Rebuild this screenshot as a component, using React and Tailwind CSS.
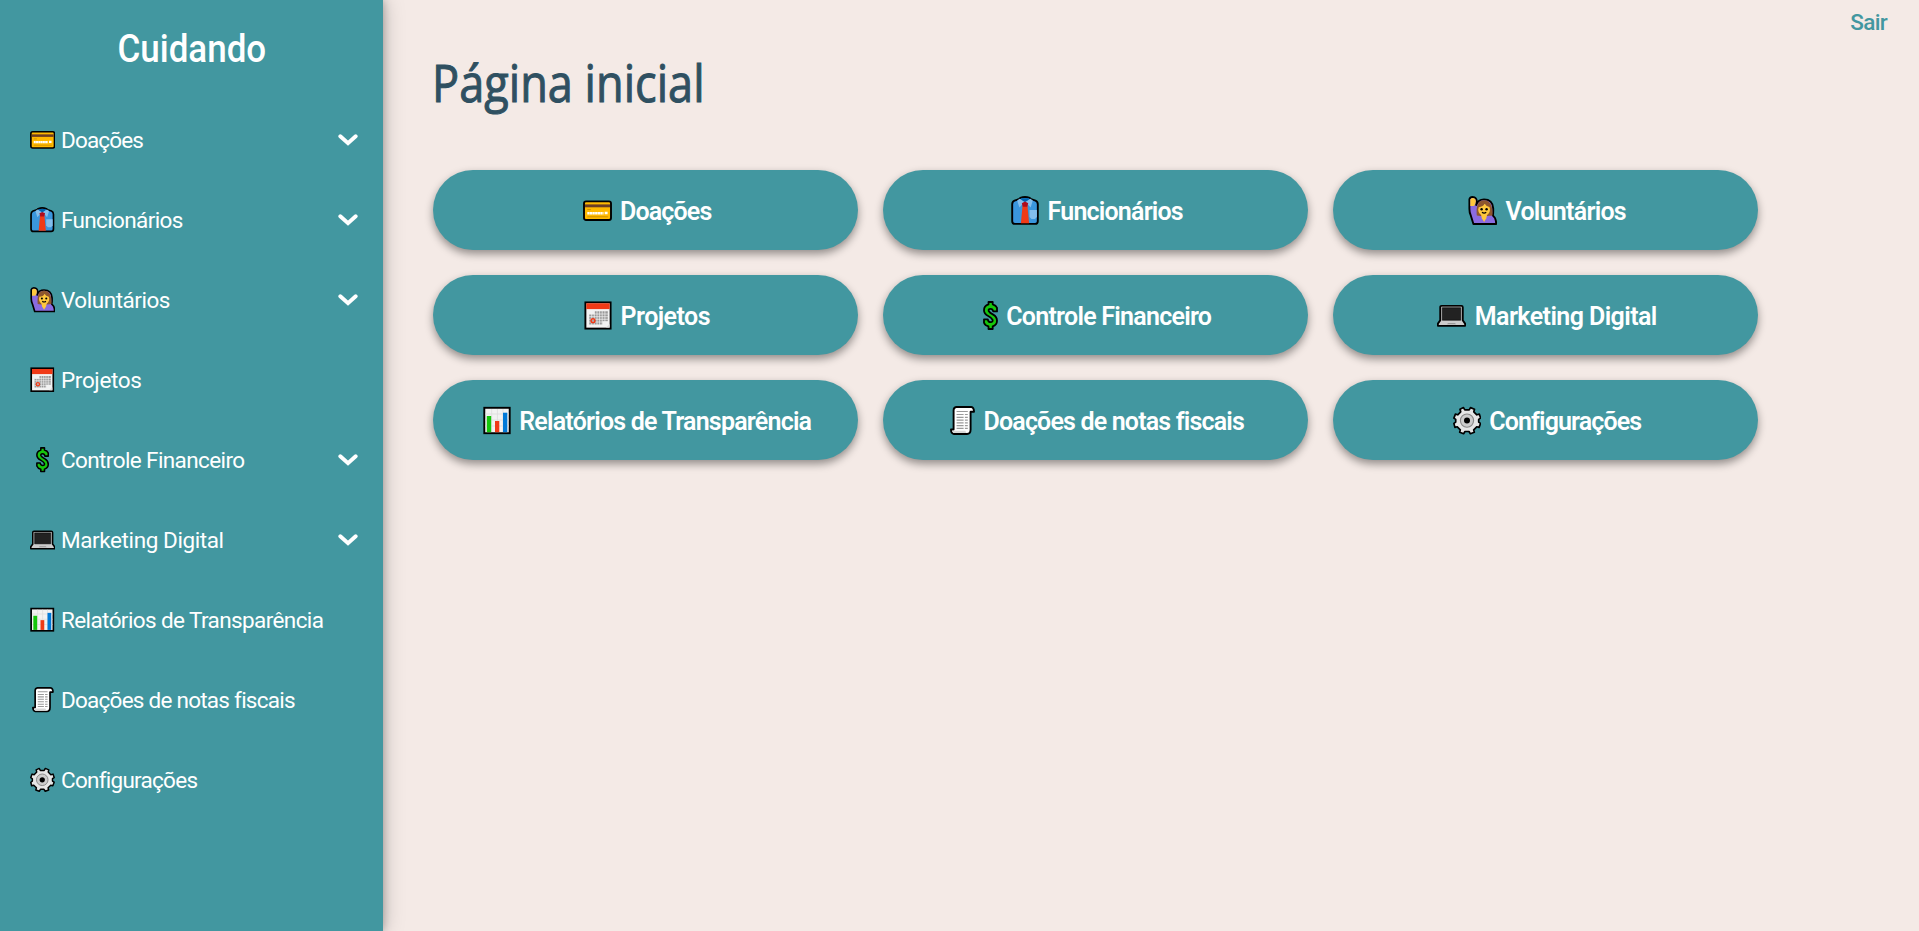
const CardIcon = ({ className }) => (
  <svg className={className} viewBox="0 0 29 29">
    <rect x="1" y="5.4" width="27" height="18.6" rx="2" fill="#ffb900" stroke="#000" strokeWidth="1.9" />
    <path d="M2 8.4h25v2.9H2z" fill="#6b3d26" />
    <path d="M4.3 13.6h3.6M4.3 20.8h20.6" stroke="#d19200" strokeWidth="1" fill="none" />
    <path d="M4.3 17.3h16.2M21.7 17h3.2" stroke="#fff" strokeWidth="2.5" strokeDasharray="2.3 .3" />
  </svg>
);

const ShirtIcon = ({ className }) => (
  <svg className={className} viewBox="0 0 28 29">
    <path d="M9.3 1.9Q14 .2 18.7 1.9L20.2 3.2l4.3 1.4q2.3 1 2.3 3.6v17q0 2.7-2.7 2.7H3.9q-2.7 0-2.7-2.7v-17q0-2.6 2.3-3.6l4.3-1.4z" fill="#3a96dd" stroke="#000" strokeWidth="1.9" strokeLinejoin="round" />
    <path d="M9.8 2.2h8.4l-1.2 3.6h-6z" fill="#0063b1" />
    <path d="M8.600 2.800L13.600 6l-5.200 5.600L6.200 4.600zM19.400 2.800L14.400 6l5.200 5.600 2.200-7z" fill="#83beec" />
    <path d="M11.600 9.200h4.800l1.700 18h-8.200z" fill="#f03a17" />
    <path d="M10.800 7.200L14 5.600l3.200 1.600-1 3.600h-4.400z" fill="#b00b1c" />
    <path d="M18.500 14h7.400v7l-2 2h-3.400l-2-2z" fill="#83beec" />
  </svg>
);

const WomanIcon = ({ className }) => (
  <svg className={className} viewBox="0 0 29 29">
    <path d="M1.400 3.200Q2 1 4.400 1t3.400 1.400q1.200 1.200.8 4L8.200 9q2-5.600 7.800-5.600 8.600 0 9.200 9 .2 5-.4 7l2.200 2.600q1.200 3 1.200 6H5.400L2.800 19.500Q1.400 17 1.400 13z" fill="#8b6be0" stroke="#000" strokeWidth="1.900" strokeLinejoin="round" />
    <path d="M2.300 10V3.600Q2.800 2 4.600 2q3.200 0 3.200 3.600Q7.600 8.500 6 10z" fill="#ffc83d" />
    <path d="M8.800 19.500Q7.400 4.300 16 4.300q9 0 8.500 15.200L19.500 20h-7.200z" fill="#8e562e" />
    <path d="M12.900 18h6.400l-1 4.200-2.200 3.800-2.300-3.800z" fill="#ffc83d" />
    <ellipse cx="16.100" cy="13.800" rx="5.900" ry="6.100" fill="#ffc83d" />
    <path d="M10.600 11.200q5-.4 6-3.600 1.200 2.800 5 3.400-1-5.200-5.400-5.200-4.800 0-5.600 5.400z" fill="#8e562e" />
    <circle cx="13.600" cy="13.200" r="1.200" fill="#000" />
    <circle cx="18.600" cy="13.200" r="1.200" fill="#000" />
    <path d="M14 16.300q2.100 1.700 4.200 0" stroke="#000" strokeWidth="1.300" fill="none" />
  </svg>
);

const CalendarIcon = ({ className }) => (
  <svg className={className} viewBox="0 0 28 29">
    <rect x="1.400" y="1.400" width="25.200" height="26.200" fill="#f2f2f2" stroke="#000" strokeWidth="1.900" />
    <path d="M2.300 2.300h23.400v5.800H2.300z" fill="#f03a17" />
    <path d="M10.600 10.300h13.200v3H10.600zM5.200 13.300h18.600v7H5.200zM5.200 20.300h13.200v3.200H5.200z" fill="#999" />
    <path d="M5 13h19M5 15.700h19M5 18.300h19M5 21h19M7.700 10v14M10.300 10v14M13 10v14M15.600 10v14M18.200 10v14M20.900 10v14" stroke="#f2f2f2" strokeWidth=".7" />
    <circle cx="9" cy="19.700" r="1.900" fill="none" stroke="#f03a17" strokeWidth="1.500" />
    <path d="M22 26.600l3.600-3.600v3.600z" fill="#ddd" />
  </svg>
);

const DollarIcon = ({ className }) => (
  <svg className={className} viewBox="0 0 15 29">
    <path d="M5.500 1h4.200v2.300Q13 4.200 14 6.800v3.600h-3.800q-.4-2.600-2.700-2.600-2.400 0-1.800 2.200.8 1.600 4.500 3.600Q14 15.700 14 19.800q0 4.300-4.300 5.500V28H5.500v-2.600Q2 24.600 1 21.800v-3.500h3.800q.3 2.800 2.800 2.800 2.500-.1 2-2.300-.7-1.800-4.400-3.800Q1 13 1 9.200q0-4.400 4.500-5.800z" fill="#16c60c" stroke="#000" strokeWidth="1.800" strokeLinejoin="round" />
  </svg>
);

const LaptopIcon = ({ className }) => (
  <svg className={className} viewBox="0 0 29 29">
    <path d="M4.600 4.800h19.800q1.400 0 1.400 1.400v13.200l2.300 3.200v2.200H.9v-2.200l2.300-3.200V6.200q0-1.400 1.400-1.400z" fill="#ccc" stroke="#000" strokeWidth="1.800" strokeLinejoin="round" />
    <path d="M4.300 5.800h20.400v13.800H4.300z" fill="#999" />
    <path d="M5.400 6.800h18.200v12.400H5.400z" fill="#222" stroke="#000" strokeWidth=".5" />
    <path d="M11 22h7l1 1.200h-9z" fill="#999" />
  </svg>
);

const ChartIcon = ({ className }) => (
  <svg className={className} viewBox="0 0 28 29">
    <rect x="1.300" y="1.800" width="25.400" height="25.400" fill="#f2f2f2" stroke="#000" strokeWidth="1.900" />
    <path d="M8.700 3v23M14.400 3v23M20 3v23M2.300 8h23.400M2.300 14h23.400M2.300 20h23.400" stroke="#dcdcdc" strokeWidth=".8" />
    <path d="M3.800 10h4.400v16.200H3.800z" fill="#16c60c" />
    <path d="M12 15h4.300v11.200H12z" fill="#f03a17" />
    <path d="M20 6.700h4.300v19.500H20z" fill="#0078d7" />
  </svg>
);

const ScrollIcon = ({ className }) => (
  <svg className={className} viewBox="0 0 25 29">
    <path d="M6.200 1h15q2.800.4 2.800 4.800h-3.400v17.700q0 4.500-3.600 4.500H4Q1 27.400 1 23.500h2.600V4Q3.800 1.400 6.200 1z" fill="#fff" stroke="#000" strokeWidth="1.900" strokeLinejoin="round" />
    <path d="M2.200 24.700h13.200q.2 1.600 1.400 2.300H4.400Q2.600 26.700 2.200 24.700z" fill="#d8d8d8" />
    <path d="M6.600 5.500h11.200M6.600 8.500h7M14.900 8.500h2.900M6.600 11.300h7M14.900 11.300h2.900M6.600 14.100h7M14.900 14.100h2.900M6.600 16.900h7M14.900 16.900h2.900M6.600 19.700h7M14.900 19.700h2.900M6.600 22.300h7M14.900 22.300h2.900" stroke="#9a9a9a" strokeWidth="1.200" />
  </svg>
);

const GearIcon = ({ className }) => (
  <svg className={className} viewBox="0 0 28 29">
    <path d="M10.500 1.600l1.300 2.300h4.400l1.300-2.300 4 1.700-.7 2.500 3 3 2.500-.7 1.300 4-1.900 1.300v2.700l1.900 1.300-1.500 4-2.400-.6-3 3 .6 2.500-3.900 1.400-1.400-2.200h-4l-1.400 2.200-3.900-1.500.6-2.400-3-3-2.400.6L.9 17.400l1.800-1.300v-2.700L.9 12.100l1.500-4 2.300.7 3-3L7 3.200z" fill="#e6e6e6" stroke="#000" strokeWidth="1.700" strokeLinejoin="round" />
    <circle cx="14" cy="14.600" r="6.600" fill="#ccc" stroke="#888" strokeWidth="1.100" />
    <circle cx="14" cy="14.600" r="3" fill="#000" />
  </svg>
);

const Chevron = () => (
  <svg className="h-[14px] w-[20px]" viewBox="0 0 20 14" fill="none" stroke="#fff" strokeWidth="3.9" strokeLinecap="round">
    <path d="M2.300 3.200L10 10.100l7.700-6.900" />
  </svg>
);

const items = [
  { label: "Doações", Icon: CardIcon, size: "w-[29px]", menu: true, nav: "tracking-[-0.85px]", tile: "tracking-[-0.85px]" },
  { label: "Funcionários", Icon: ShirtIcon, size: "w-[28px]", menu: true, nav: "tracking-[-0.63px]", tile: "tracking-[-0.8px]" },
  { label: "Voluntários", Icon: WomanIcon, size: "w-[29px]", menu: true, nav: "tracking-[-0.46px]", tile: "tracking-[-0.74px]" },
  { label: "Projetos", Icon: CalendarIcon, size: "w-[28px]", nav: "tracking-[-0.35px]", tile: "tracking-[-0.54px]" },
  { label: "Controle Financeiro", Icon: DollarIcon, size: "w-[15px]", menu: true, nav: "tracking-[-0.6px]", tile: "tracking-[-0.75px]" },
  { label: "Marketing Digital", Icon: LaptopIcon, size: "w-[29px]", menu: true, nav: "tracking-[-0.4px]", tile: "tracking-[-0.58px]" },
  { label: "Relatórios de Transparência", Icon: ChartIcon, size: "w-[28px]", nav: "tracking-[-0.6px]", tile: "tracking-[-0.79px]" },
  { label: "Doações de notas fiscais", Icon: ScrollIcon, size: "w-[25px]", nav: "tracking-[-0.75px]", tile: "tracking-[-0.83px]" },
  { label: "Configurações", Icon: GearIcon, size: "w-[28px]", nav: "tracking-[-0.73px]", tile: "tracking-[-0.9px]" },
];

const Sidebar = () => (
  <aside className="w-[383px] shrink-0 bg-[#4297a0] text-white shadow-[0_0_8px_rgba(0,0,0,0.25),0_0_20px_rgba(0,0,0,0.25)]">
    <h1 className="mb-[3px] flex h-[97px] items-center justify-center text-[38px] leading-none font-medium">
      <span className="scale-x-92">Cuidando</span>
    </h1>
    <nav>
      {items.map(({ label, Icon, menu, nav }) => (
        <a key={label} className="flex h-20 items-center pr-[25px] pl-[30px] text-[22.5px]">
          <span className="mr-[5.6px] flex w-[25.4px] justify-center">
            <Icon className="h-[25.4px]" />
          </span>
          <span className={`pt-px whitespace-nowrap ${nav}`}>{label}</span>
          {menu && (
            <span className="ml-auto">
              <Chevron />
            </span>
          )}
        </a>
      ))}
    </nav>
  </aside>
);

export default function App() {
  return (
    <div className="flex h-[931px] w-full overflow-hidden bg-[#f4eae6] font-['Roboto',sans-serif]">
      <Sidebar />
      <main className="min-w-0 flex-1 pl-[50px]">
        <div className="flex h-[45px] items-center justify-end pr-[32px] text-[22.5px] font-medium tracking-[-0.7px] text-[#4297a0]">
          <a>Sair</a>
        </div>
        <h2 className="-ml-px flex h-[74px] items-center font-['Open_Sans',sans-serif] text-[51px] leading-none text-[#2f5061] [-webkit-text-stroke:1px_#2f5061]">
          <span className="origin-left scale-x-[0.885]">Página inicial</span>
        </h2>
        <div className="mt-[51px] grid grid-cols-[repeat(3,425px)] gap-[25px]">
          {items.map(({ label, Icon, size, tile }) => (
            <button
              key={label}
              className="flex h-20 items-center justify-center rounded-full bg-[#4297a0] pl-[3px] text-[25px] font-semibold text-white shadow-[0_4px_8px_rgba(0,0,0,0.4)]"
            >
              <Icon className={`mr-[8.5px] h-[29px] shrink-0 ${size}`} />
              <span className={`pt-[3px] whitespace-nowrap ${tile}`}>{label}</span>
            </button>
          ))}
        </div>
      </main>
    </div>
  );
}
